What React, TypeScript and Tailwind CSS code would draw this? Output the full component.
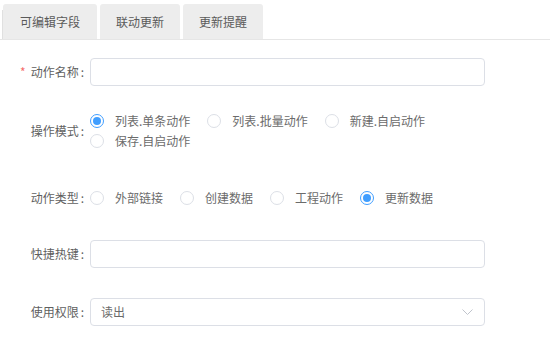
import { useState } from "react";

const tabs = [
  { label: "可编辑字段", width: "w-[94px]" },
  { label: "联动更新", width: "w-[80px]" },
  { label: "更新提醒", width: "w-[80px]" },
];

const modes = ["列表.单条动作", "列表.批量动作", "新建.自启动作", "保存.自启动作"];
const types = ["外部链接", "创建数据", "工程动作", "更新数据"];

function Radio({ label, checked }: { label: string; checked?: boolean }) {
  return (
    <label className="mr-[17px] flex h-[20px] items-center">
      <span
        className={
          checked
            ? "flex size-[14px] items-center justify-center rounded-full border border-[#409eff] bg-white"
            : "size-[14px] rounded-full border border-[#dcdfe6] bg-white"
        }
      >
        {checked && <span className="size-[8px] rounded-full bg-[#409eff]" />}
      </span>
      <span className="ml-[11px] whitespace-nowrap text-[#6b6b6b]">{label}</span>
    </label>
  );
}

function Label({ text, required }: { text: string; required?: boolean }) {
  return (
    <div className="flex w-[90px] shrink-0 items-center justify-end pr-[6px] text-[#5f5f5f]">
      {required && <span className="mr-[5px] text-[#f56c6c]">*</span>}
      <span>{text}</span>
      <span className="ml-[2px]">:</span>
    </div>
  );
}

export default function App() {
  const [mode] = useState(0);
  const [type] = useState(3);

  return (
    <div
      className="h-[350px] w-[550px] overflow-hidden bg-white text-[12px]"
      style={{ fontFamily: '"Noto Sans CJK SC", "Noto Sans", sans-serif' }}
    >
      <div className="flex h-[40px] items-end border-b border-[#e6e6e6] pt-[4px]">
        <div className="h-[29px] w-[3px] border-r border-[#e0e0e0]" />
        {tabs.map((t, i) => (
          <div
            key={t.label}
            className={`${t.width} flex h-[35px] items-center justify-center rounded-t-[3px] bg-[#ededed] text-[#5a5a5a] ${
              i > 0 ? "ml-[3px]" : ""
            }`}
          >
            {t.label}
          </div>
        ))}
      </div>

      <div className="mt-[18px] flex h-[28px]">
        <Label text="动作名称" required />
        <div className="h-[28px] w-[395px] rounded-[4px] border border-[#dcdfe6] bg-white" />
      </div>

      <div className="mt-[25px] flex">
        <Label text="操作模式" />
        <div className="flex w-[400px] flex-wrap">
          {modes.map((m, i) => (
            <Radio key={m} label={m} checked={i === mode} />
          ))}
        </div>
      </div>

      <div className="mt-[37px] flex h-[20px]">
        <Label text="动作类型" />
        <div className="flex">
          {types.map((t, i) => (
            <Radio key={t} label={t} checked={i === type} />
          ))}
        </div>
      </div>

      <div className="mt-[32px] flex h-[28px]">
        <Label text="快捷热键" />
        <div className="h-[28px] w-[395px] rounded-[4px] border border-[#dcdfe6] bg-white" />
      </div>

      <div className="mt-[30px] flex h-[28px]">
        <Label text="使用权限" />
        <div className="flex h-[28px] w-[395px] items-center justify-between rounded-[4px] border border-[#dcdfe6] bg-white pl-[10px] pr-[11px]">
          <span className="text-[#6b6b6b]">读出</span>
          <svg width="11" height="7" viewBox="0 0 11 7" fill="none">
            <path d="M0.5 0.5 L5.5 5.5 L10.5 0.5" stroke="#c0c4cc" strokeWidth="1" />
          </svg>
        </div>
      </div>
    </div>
  );
}
